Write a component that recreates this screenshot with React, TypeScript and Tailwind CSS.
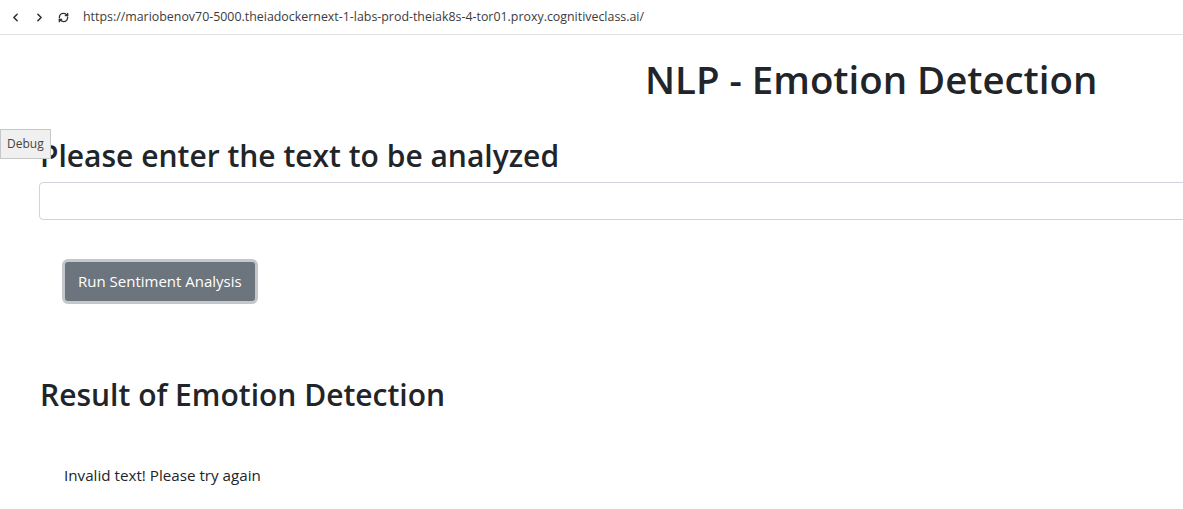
import { LuChevronLeft, LuChevronRight, LuRefreshCw } from 'react-icons/lu'

export default function App() {
  return (
    <div className="relative h-[509px] w-[1183px] overflow-hidden bg-white font-['Open_Sans',sans-serif] text-[#212529]">
      <div className="flex h-[35px] items-center border-b border-[#e0e0e0] pl-[9px] text-[#333]">
        <LuChevronLeft className="h-[13px] w-[13px] stroke-[3]" />
        <LuChevronRight className="ml-[11px] h-[13px] w-[13px] stroke-[3]" />
        <LuRefreshCw className="ml-[12px] h-[11px] w-[11px] stroke-[3]" />
        <span className="ml-[14px] text-[12.4px] text-[#3c3c3c]">
          https://mariobenov70-5000.theiadockernext-1-labs-prod-theiak8s-4-tor01.proxy.cognitiveclass.ai/
        </span>
      </div>

      <button className="absolute left-0 top-[129px] h-[30px] border border-[#c8c8c8] bg-[#f0f0f0] px-[6px] text-[12px] text-[#444]">
        Debug
      </button>

      <div className="pl-[39px]">
        <h1 className="ml-[606px] mt-[20px] whitespace-nowrap text-[38.4px] font-semibold leading-[48px]">
          NLP - Emotion Detection
        </h1>
        <h2 className="ml-px mt-[34px] whitespace-nowrap text-[30px] font-semibold leading-[38px]">
          Please enter the text to be analyzed
        </h2>
        <input
          type="text"
          className="mt-[7px] block h-[38px] w-[1200px] rounded-[4px] border border-[#ced4da] px-3"
        />
        <div className="pl-[23px] pt-[39px]">
          <button className="rounded-[6px] border-[3px] border-[#c4c8cc] bg-[#6c757d] px-[13px] py-[7px] text-[15px] leading-[25px] text-white">
            Run Sentiment Analysis
          </button>
        </div>
        <h2 className="ml-px mt-[72px] whitespace-nowrap text-[30px] font-semibold leading-[38px]">
          Result of Emotion Detection
        </h2>
        <p className="ml-[25px] mt-[49px] text-[15.2px] leading-[24px]">Invalid text! Please try again</p>
      </div>
    </div>
  )
}
